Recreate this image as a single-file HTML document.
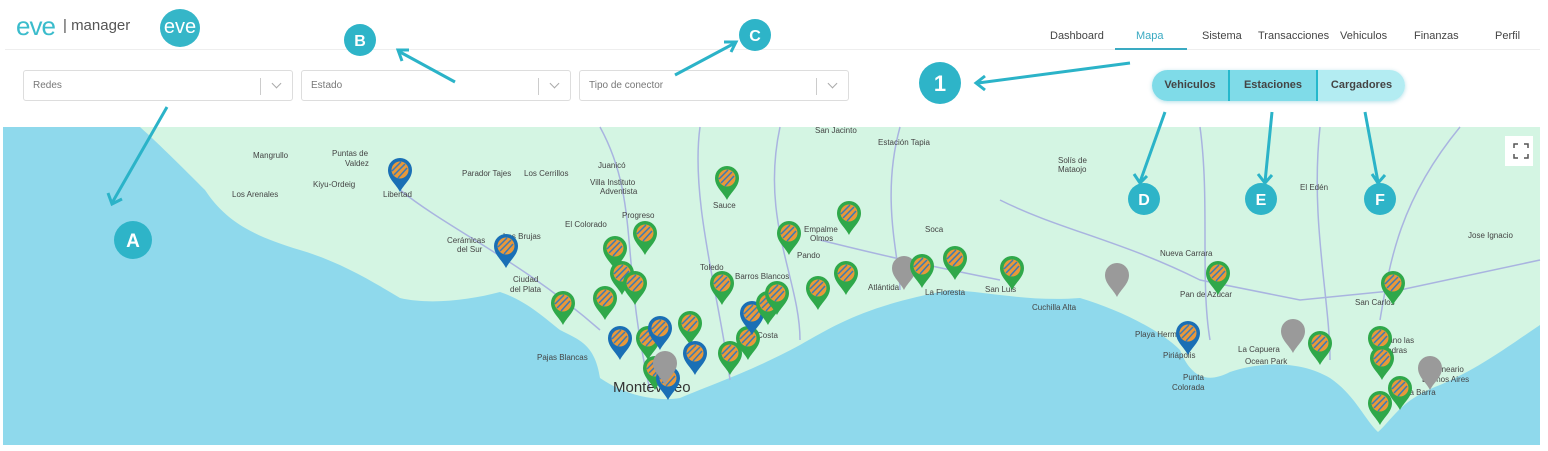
<!DOCTYPE html>
<html><head><meta charset="utf-8"><style>
*{margin:0;padding:0;box-sizing:border-box}
body{width:1548px;height:451px;background:#fff;font-family:"Liberation Sans",sans-serif;position:relative;overflow:hidden}
.abs{position:absolute}
.nav{top:30px;font-size:11px;color:#444}
.dd{top:70px;height:31px;width:270px;border:1px solid #ddd;border-radius:3px;font-size:10px;color:#777;padding:9px 9px}
.dd .sep{position:absolute;right:31px;top:7px;height:17px;border-left:1px solid #ccc}
.dd .ch{position:absolute;right:12px;top:9px;width:7px;height:7px;border-right:1px solid #aaa;border-bottom:1px solid #aaa;transform:rotate(45deg)}
</style></head><body>
<div class="abs" style="left:16px;top:11px;font-size:26px;color:#3bbccc;letter-spacing:-1px">eve</div>
<div class="abs" style="left:63px;top:17px;font-size:15px;color:#555">| manager</div>
<div class="abs" style="left:160px;top:9px;width:40px;height:38px;border-radius:50%;background:#35b6c8;color:#fff;font-size:20px;text-align:center;line-height:36px">eve</div>
<div class="abs" style="left:5px;top:49px;width:1535px;border-top:1px solid #eee"></div>
<div class="abs nav" style="left:1050px">Dashboard</div>
<div class="abs nav" style="left:1136px;color:#3aaac2">Mapa</div>
<div class="abs nav" style="left:1202px">Sistema</div>
<div class="abs nav" style="left:1258px">Transacciones</div>
<div class="abs nav" style="left:1340px">Vehiculos</div>
<div class="abs nav" style="left:1414px">Finanzas</div>
<div class="abs nav" style="left:1495px">Perfil</div>
<div class="abs" style="left:1115px;top:48px;width:72px;height:2px;background:#3aaac2"></div>
<div class="abs dd" style="left:23px">Redes<div class="sep"></div><div class="ch"></div></div>
<div class="abs dd" style="left:301px">Estado<div class="sep"></div><div class="ch"></div></div>
<div class="abs dd" style="left:579px">Tipo de conector<div class="sep"></div><div class="ch"></div></div>
<div class="abs" style="left:1152px;top:70px;width:253px;height:31px;border-radius:16px;overflow:hidden;display:flex;font-size:11px;font-weight:bold;color:#444;box-shadow:0 1px 4px rgba(0,150,180,.3)">
<div style="width:78px;background:#7fdbe8;text-align:center;line-height:31px;border-right:2px solid #25b8cc">Vehiculos</div>
<div style="width:88px;background:#7fdbe8;text-align:center;line-height:31px;border-right:2px solid #25b8cc">Estaciones</div>
<div style="flex:1;background:#b3ecf2;text-align:center;line-height:31px">Cargadores</div></div>

<svg class="abs" style="left:0;top:0" width="1548" height="451">
<defs>
<path id="tear" d="M0 0 C-4 -8 -12 -13 -12 -22 A12 12 0 1 1 12 -22 C12 -13 4 -8 0 0Z"/>
<g id="pg"><use href="#tear" fill="#2fa84a"/><circle cx="0" cy="-22" r="8.5" fill="#e8983a"/><path d="M-6-17 L5-28 M-2-14 L7-24 M-8-21 L1-30" stroke="#3a7ab8" stroke-width="1.5"/></g>
<g id="pb"><use href="#tear" fill="#1a6fb5"/><circle cx="0" cy="-22" r="8.5" fill="#e8983a"/><path d="M-6-17 L5-28 M-2-14 L7-24 M-8-21 L1-30" stroke="#3a7ab8" stroke-width="1.5"/></g>
<g id="pgr"><use href="#tear" fill="#9a9a9a"/></g>
</defs>
<rect x="3" y="127" width="1537" height="318" fill="#d4f5e3"/>
<path d="M3 127 L140 127 C160 145 185 170 205 190 C225 220 250 235 300 250 C340 262 370 280 400 298 C430 305 470 300 500 292 C525 300 545 318 560 330 C580 340 595 345 600 378 C625 395 655 402 680 398 C710 385 750 372 800 345 C840 322 870 305 950 290 C990 292 1030 302 1080 298 C1120 310 1160 330 1180 350 C1190 375 1205 385 1230 372 C1260 362 1300 360 1330 378 C1355 395 1365 420 1378 432 C1392 420 1400 400 1440 385 C1480 368 1510 345 1540 325 L1540 445 L3 445Z" fill="#8fd9ec"/>
<g stroke="#a9b4e0" stroke-width="1.5" fill="none">
<path d="M600 127 C640 200 620 260 650 390"/><path d="M700 127 C690 200 720 300 730 380"/><path d="M780 127 C760 220 800 280 800 340"/>
<path d="M400 190 C450 230 520 260 600 330"/><path d="M900 127 C880 200 900 260 900 290"/><path d="M1000 200 C1060 230 1120 240 1200 280 L1300 300 L1400 290 L1540 260"/>
<path d="M1200 127 C1210 200 1200 280 1210 340"/><path d="M1320 127 C1310 220 1330 300 1330 360"/><path d="M1460 127 C1400 200 1390 260 1380 320"/><path d="M820 240 C900 260 950 270 1000 280"/>
</g>
<g font-size="8" fill="#444">
<text x="253" y="158">Mangrullo</text><text x="232" y="197">Los Arenales</text><text x="313" y="187">Kiyu-Ordeig</text><text x="332" y="156">Puntas de</text><text x="345" y="166">Valdez</text>
<text x="462" y="176">Parador Tajes</text><text x="524" y="176">Los Cerrillos</text><text x="383" y="197">Libertad</text><text x="598" y="168">Juanicó</text>
<text x="590" y="185">Villa Instituto</text><text x="600" y="194">Adventista</text><text x="565" y="227">El Colorado</text><text x="622" y="218">Progreso</text>
<text x="503" y="239">Las Brujas</text><text x="447" y="243">Cerámicas</text><text x="457" y="252">del Sur</text><text x="513" y="282">Ciudad</text><text x="510" y="292">del Plata</text>
<text x="537" y="360">Pajas Blancas</text><text x="713" y="208">Sauce</text><text x="815" y="133">San Jacinto</text><text x="878" y="145">Estación Tapia</text>
<text x="804" y="232">Empalme</text><text x="810" y="241">Olmos</text><text x="797" y="258">Pando</text><text x="700" y="270">Toledo</text><text x="735" y="279">Barros Blancos</text>
<text x="925" y="232">Soca</text><text x="925" y="295">La Floresta</text><text x="985" y="292">San Luis</text><text x="1032" y="310">Cuchilla Alta</text>
<text x="1058" y="163">Solís de</text><text x="1058" y="172">Mataojo</text><text x="1300" y="190">El Edén</text><text x="1468" y="238">Jose Ignacio</text>
<text x="1160" y="256">Nueva Carrara</text><text x="1180" y="297">Pan de Azúcar</text><text x="1135" y="337">Playa Hermosa</text><text x="1163" y="358">Piriápolis</text>
<text x="1183" y="380">Punta</text><text x="1172" y="390">Colorada</text><text x="1238" y="352">La Capuera</text><text x="1245" y="364">Ocean Park</text>
<text x="1355" y="305">San Carlos</text><text x="1375" y="343">Fasano las</text><text x="1380" y="353">Piedras</text><text x="1430" y="372">Balneario</text><text x="1422" y="382">Buenos Aires</text><text x="1405" y="395">La Barra</text>
<text x="757" y="338">Costa</text><text x="868" y="290">Atlántida</text>
<text x="613" y="392" font-size="15" fill="#333">Montevideo</text>
</g>
<rect x="1505" y="136" width="28" height="30" fill="#fff"/><path d="M1514 148v-4h4M1524 144h4v4M1528 154v4h-4M1518 158h-4v-4" stroke="#555" stroke-width="1.5" fill="none"/>
<use href="#pb" x="400" y="192"/><use href="#pb" x="506" y="268"/><use href="#pg" x="727" y="200"/><use href="#pg" x="849" y="235"/>
<use href="#pg" x="789" y="255"/><use href="#pg" x="645" y="255"/><use href="#pg" x="615" y="270"/><use href="#pg" x="622" y="295"/><use href="#pg" x="635" y="305"/>
<use href="#pg" x="563" y="325"/><use href="#pg" x="605" y="320"/><use href="#pg" x="722" y="305"/><use href="#pg" x="818" y="310"/><use href="#pg" x="846" y="295"/>
<use href="#pgr" x="904" y="290"/><use href="#pg" x="922" y="288"/><use href="#pg" x="955" y="280"/><use href="#pg" x="1012" y="290"/><use href="#pgr" x="1117" y="297"/>
<use href="#pg" x="1218" y="295"/><use href="#pg" x="1393" y="305"/><use href="#pb" x="1188" y="355"/><use href="#pgr" x="1293" y="353"/><use href="#pg" x="1320" y="365"/>
<use href="#pg" x="1380" y="360"/><use href="#pg" x="1382" y="380"/><use href="#pgr" x="1430" y="390"/><use href="#pg" x="1400" y="410"/><use href="#pg" x="1380" y="425"/>
<use href="#pb" x="620" y="360"/><use href="#pg" x="648" y="360"/><use href="#pb" x="660" y="350"/><use href="#pg" x="690" y="345"/><use href="#pb" x="695" y="375"/>
<use href="#pg" x="730" y="375"/><use href="#pg" x="748" y="360"/><use href="#pb" x="752" y="335"/><use href="#pg" x="768" y="325"/><use href="#pg" x="777" y="315"/>
<use href="#pg" x="655" y="390"/><use href="#pb" x="668" y="400"/><use href="#pgr" x="665" y="385"/>
<g stroke="#2bb3c8" stroke-width="3" fill="none">
<path d="M1130 63 L978 83 M985 76 L976 83 L985 90"/><path d="M455 82 L400 52 M402 61 L398 50 L409 50"/><path d="M675 75 L735 43 M724 42 L736 42 L731 52"/>
<path d="M167 107 L112 203 M108 193 L112 204 L122 199"/><path d="M1165 112 L1140 182 M1134 174 L1140 183 L1147 176"/><path d="M1272 112 L1265 182 M1258 174 L1265 183 L1272 175"/><path d="M1365 112 L1378 182 M1372 174 L1378 183 L1385 175"/>
</g>
<g fill="#2eb4c8"><circle cx="360" cy="40" r="16"/><circle cx="755" cy="35" r="16"/><circle cx="940" cy="83" r="21"/><circle cx="133" cy="240" r="19"/><circle cx="1144" cy="199" r="16"/><circle cx="1261" cy="199" r="16"/><circle cx="1380" cy="199" r="16"/></g>
<g fill="#fff" font-weight="bold" text-anchor="middle" font-size="16"><text x="360" y="46">B</text><text x="755" y="41">C</text><text x="940" y="91" font-size="22">1</text><text x="133" y="247" font-size="19">A</text><text x="1144" y="205">D</text><text x="1261" y="205">E</text><text x="1380" y="205">F</text></g>
</svg>
</body></html>
